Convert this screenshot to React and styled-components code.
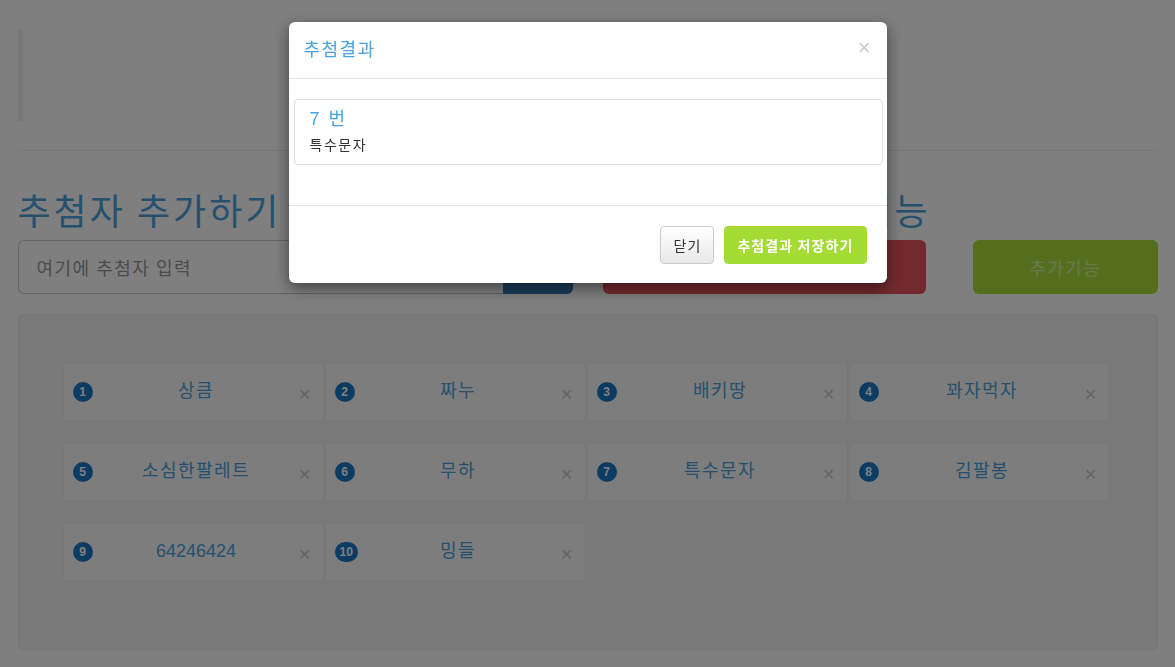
import React from "react";
import styled, { createGlobalStyle } from "styled-components";

const GlobalStyle = createGlobalStyle`
  html, body { margin: 0; padding: 0; background: #fff; }
  body {
    font-family: "Noto Sans CJK KR", "Noto Sans", "Liberation Sans", sans-serif;
    font-size: 14px;
    line-height: 1.42857;
    color: #333;
    letter-spacing: 0.08em;
    overflow: hidden;
  }
  * { box-sizing: border-box; }
`;

const Container = styled.div`
  width: 1140px;
  margin: 0 auto;
  padding-top: 30px;
`;

const Quote = styled.div`
  height: 91px;
  border-left: 5px solid #eee;
`;

const Rule = styled.hr`
  margin: 29px 0 0;
  border: 0;
  border-top: 1px solid #eee;
`;

const Row = styled.div`
  display: grid;
  grid-template-columns: 555px 555px;
  column-gap: 30px;
  padding-top: 38px;
`;

const Heading = styled.h1`
  margin: 0 0 11px;
  font-size: 36px;
  font-weight: 400;
  line-height: 40px;
  letter-spacing: 3px;
  color: #4aa3df;
  white-space: nowrap;
`;

const InputGroup = styled.div`
  display: flex;
  height: 54px;
`;

const Input = styled.input`
  flex: 1;
  height: 54px;
  padding: 0 18px;
  font-family: inherit;
  font-size: 18px;
  letter-spacing: 1.5px;
  border: 1px solid #ccc;
  border-right: 0;
  border-radius: 6px 0 0 6px;
  color: #555;
  &::placeholder { color: #999; }
`;

const AddButton = styled.button`
  width: 70px;
  border: 0;
  border-radius: 0 6px 6px 0;
  background: #337ab7;
`;

const ActionRow = styled.div`
  display: flex;
  gap: 47px;
`;

const ActionButton = styled.button`
  width: ${(p) => p.$w}px;
  height: 54px;
  border: 0;
  border-radius: 6px;
  background: ${(p) => p.$bg};
  color: ${(p) => p.$fg};
  font-family: inherit;
  font-size: 18px;
  letter-spacing: 1.5px;
`;

const Well = styled.div`
  margin-top: 20px;
  height: 336px;
  background: #f5f5f5;
  border: 1px solid #ececec;
  border-radius: 4px;
  padding: 48px 45px 0 44px;
`;

const CardGrid = styled.div`
  display: grid;
  grid-template-columns: repeat(4, 262px);
  grid-auto-rows: 58px;
  row-gap: 22px;
`;

const Card = styled.div`
  position: relative;
  display: flex;
  align-items: center;
  justify-content: center;
  padding-left: 6px;
  background: #fafafa;
  border: 1px solid #eee;
  margin-right: 1px;
  border-radius: 2px;
`;

const Badge = styled.span`
  position: absolute;
  left: 9px;
  top: 18px;
  min-width: 20px;
  height: 20px;
  padding: 0 ${(p) => (p.$wide ? 5 : 0)}px;
  border-radius: 10px;
  background: #1a78c6;
  color: #fff;
  font-family: "Liberation Sans", sans-serif;
  font-weight: 700;
  font-size: 12px;
  letter-spacing: 0;
  line-height: 20px;
  text-align: center;
`;

const CardName = styled.span`
  font-family: "Liberation Sans", "Noto Sans CJK KR", sans-serif;
  font-size: 18px;
  letter-spacing: ${(p) => (p.$latin ? 0 : 1.4)}px;
  color: #4aa3df;
`;

const CardClose = styled.span`
  position: absolute;
  right: 12px;
  top: 20px;
  font-family: "Liberation Sans", sans-serif;
  font-size: 20px;
  line-height: 20px;
  letter-spacing: 0;
  color: #c8c8c8;
`;

const Backdrop = styled.div`
  position: fixed;
  inset: 0;
  background: rgba(0, 0, 0, 0.5);
`;

const Dialog = styled.div`
  position: fixed;
  top: 22px;
  left: 50%;
  transform: translateX(-50%);
  width: 598px;
  background: #fff;
  border-radius: 6px;
  box-shadow: 0 5px 15px rgba(0, 0, 0, 0.5);
`;

const ModalHeader = styled.div`
  display: flex;
  align-items: center;
  justify-content: space-between;
  padding: 13px 15px 17px;
  border-bottom: 1px solid #e5e5e5;
`;

const ModalTitle = styled.h4`
  margin: 0;
  font-size: 18px;
  font-weight: 400;
  line-height: 26px;
  letter-spacing: 1.5px;
  color: #4aa3df;
`;

const CloseX = styled.span`
  font-family: "Liberation Sans", sans-serif;
  font-size: 22px;
  font-weight: 400;
  letter-spacing: 0;
  color: #c9c9c9;
  margin-right: 1px;
  line-height: 1;
`;

const ModalBody = styled.div`
  padding: 20px 4px 40px 5px;
`;

const ResultPanel = styled.div`
  border: 1px solid #ddd;
  border-radius: 4px;
  padding: 6px 15px 10px;
`;

const ResultNumber = styled.div`
  font-family: "Liberation Sans", "Noto Sans CJK KR", sans-serif;
  font-size: 18px;
  line-height: 26px;
  letter-spacing: 1px;
  word-spacing: 2px;
  color: #4aa3df;
`;

const ResultName = styled.div`
  font-size: 14px;
  line-height: 20px;
  margin-top: 2px;
  letter-spacing: 1.5px;
  color: #333;
`;

const ModalFooter = styled.div`
  display: flex;
  justify-content: flex-end;
  gap: 10px;
  padding: 20px 20px 19px;
  border-top: 1px solid #e5e5e5;
`;

const FooterButton = styled.button`
  height: 38px;
  padding: 0 12px;
  border-radius: 4px;
  font-family: inherit;
  font-size: 14px;
  letter-spacing: 1.1px;
  font-weight: ${(p) => (p.$primary ? 700 : 400)};
  border: 1px solid ${(p) => (p.$primary ? "#a4dc35" : "#ccc")};
  background: ${(p) =>
    p.$primary ? "#a4dc35" : "linear-gradient(to bottom, #fff 0%, #e8e8e8 100%)"};
  color: ${(p) => (p.$primary ? "#fff" : "#333")};
`;

const people = [
  "상큼",
  "짜누",
  "배키땅",
  "꽈자먹자",
  "소심한팔레트",
  "무하",
  "특수문자",
  "김팔봉",
  "64246424",
  "밍들",
];

export default function App() {
  return (
    <>
      <GlobalStyle />
      <Container>
        <Quote />
        <Rule />
        <Row>
          <div>
            <Heading>추첨자 추가하기</Heading>
            <InputGroup>
              <Input placeholder="여기에 추첨자 입력" />
              <AddButton aria-label="추가" />
            </InputGroup>
          </div>
          <div>
            <Heading>추첨하기 / 추가기능</Heading>
            <ActionRow>
              <ActionButton $w={323} $bg="#e5545f" $fg="#fff" aria-label="추첨하기" />
              <ActionButton $w={185} $bg="#a6dc38" $fg="rgba(255,255,255,0.55)">
                추가기능
              </ActionButton>
            </ActionRow>
          </div>
        </Row>
        <Well>
          <CardGrid>
            {people.map((name, i) => (
              <Card key={i}>
                <Badge $wide={i + 1 >= 10}>{i + 1}</Badge>
                <CardName $latin={/^[0-9]+$/.test(name)}>{name}</CardName>
                <CardClose>×</CardClose>
              </Card>
            ))}
          </CardGrid>
        </Well>
      </Container>
      <Backdrop />
      <Dialog>
        <ModalHeader>
          <ModalTitle>추첨결과</ModalTitle>
          <CloseX>×</CloseX>
        </ModalHeader>
        <ModalBody>
          <ResultPanel>
            <ResultNumber>7 번</ResultNumber>
            <ResultName>특수문자</ResultName>
          </ResultPanel>
        </ModalBody>
        <ModalFooter>
          <FooterButton>닫기</FooterButton>
          <FooterButton $primary>추첨결과 저장하기</FooterButton>
        </ModalFooter>
      </Dialog>
    </>
  );
}
